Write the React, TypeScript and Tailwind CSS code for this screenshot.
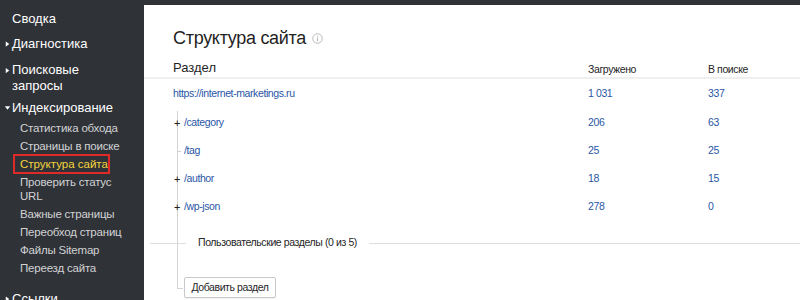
import React from 'react';

type NavItem = { label: string; arrow?: 'right' | 'down' };

const subItems = [
  'Статистика обхода',
  'Страницы в поиске',
  'Структура сайта',
  'Проверить статус URL',
  'Важные страницы',
  'Переобход страниц',
  'Файлы Sitemap',
  'Переезд сайта',
];

const rows = [
  { path: '/category', loaded: '206', found: '63', expand: true },
  { path: '/tag', loaded: '25', found: '25', expand: false },
  { path: '/author', loaded: '18', found: '15', expand: true },
  { path: '/wp-json', loaded: '278', found: '0', expand: true },
];

function Arrow({ dir }: { dir: 'right' | 'down' }) {
  return (
    <svg className="absolute left-[4px] top-1/2 h-[7px] w-[7px] -translate-y-1/2" viewBox="0 0 8 8">
      {dir === 'right' ? <path d="M2 1l4 3-4 3z" fill="#fff" /> : <path d="M1 2h6L4 6z" fill="#fff" />}
    </svg>
  );
}

function TopItem({ label, arrow, className = '' }: NavItem & { className?: string }) {
  return (
    <div className={`relative pl-[12px] text-[13px] leading-[16px] text-white ${className}`}>
      {arrow && <Arrow dir={arrow} />}
      {label}
    </div>
  );
}

function Sidebar() {
  return (
    <aside className="w-[144px] shrink-0 pt-[11px]">
      <TopItem label="Сводка" />
      <TopItem label="Диагностика" arrow="right" className="mt-[9px]" />
      <div className="relative mt-[10px] pl-[12px] text-[13px] leading-[16px] text-white">
        <svg className="absolute left-[4px] top-[5px] h-[7px] w-[7px]" viewBox="0 0 8 8">
          <path d="M2 1l4 3-4 3z" fill="#fff" />
        </svg>
        Поисковые
        <br />
        запросы
      </div>
      <TopItem label="Индексирование" arrow="down" className="mt-[6px]" />
      <ul className="mt-[3px] text-[11.5px] leading-[14px] text-[#d2d3d5]">
        {subItems.map((s) =>
          s === 'Структура сайта' ? (
            <li key={s} className="py-[2px] pl-[13px]">
              <span className="-my-[3px] inline-block w-[97px] border-2 border-[#e02a2a] py-[1px] pl-[5px] text-[#f4d43c]">
                {s}
              </span>
            </li>
          ) : (
            <li key={s} className="w-[124px] py-[2px] pl-[20px] tracking-[-0.2px]">
              {s}
            </li>
          )
        )}
      </ul>
      <TopItem label="Ссылки" arrow="right" className="mt-[14px]" />
    </aside>
  );
}

function InfoIcon() {
  return (
    <svg className="ml-[6px] h-[11px] w-[11px]" viewBox="0 0 12 12">
      <circle cx="6" cy="6" r="5.2" fill="none" stroke="#b5b5b5" strokeWidth="1" />
      <rect x="5.4" y="5" width="1.2" height="4" fill="#b5b5b5" />
      <rect x="5.4" y="3" width="1.2" height="1.2" fill="#b5b5b5" />
    </svg>
  );
}

const small = 'text-[10.5px] tracking-[-0.4px]';

export default function App() {
  return (
    <div className="flex h-[300px] w-[800px] overflow-hidden bg-[#2f3237] font-['Liberation_Sans',Arial,sans-serif]">
      <Sidebar />
      <main className="mt-[5px] flex-1 bg-white">
        <h1 className="mt-[21px] flex h-[24px] items-center pl-[29px] text-[18px] leading-[24px] tracking-[-0.3px] text-[#1f1f1f]">
          Структура сайта
          <InfoIcon />
        </h1>

        <div className="grid h-[29px] grid-cols-[444px_120px_1fr] items-end border-b-2 border-[#efefef] pb-[1px] leading-[14px] text-[#262626]">
          <div className="pl-[29px] text-[13px] leading-[16px] text-[#1f1f1f]">Раздел</div>
          <div className={small}>Загружено</div>
          <div className={small}>В поиске</div>
        </div>

        <div className={`grid h-[30px] grid-cols-[444px_120px_1fr] items-center text-[#2a56a6] ${small}`}>
          <div className="pl-[29px]">https://internet-marketings.ru</div>
          <div>1 031</div>
          <div>337</div>
        </div>

        <div className="relative">
          <div className="absolute left-[33px] top-[2px] h-[178px] w-[6px] border-b border-l border-[#d4d4d4]" />

          {rows.map((r) => (
            <div key={r.path} className={`grid h-[28px] grid-cols-[444px_120px_1fr] items-center text-[#2a56a6] ${small}`}>
              <div className="relative pl-[40px]">
                {r.expand ? (
                  <span className="absolute left-[30px] top-1/2 -translate-y-1/2 text-[11px] leading-[10px] tracking-normal text-[#222]">+</span>
                ) : (
                  <span className="absolute left-[34px] top-1/2 h-px w-[3px] bg-[#cfcfcf]" />
                )}
                {r.path}
              </div>
              <div>{r.loaded}</div>
              <div>{r.found}</div>
            </div>
          ))}

          <div className={`flex h-[44px] items-center text-[#262626] ${small}`}>
            <div className="ml-[6px] h-px w-[36px] bg-[#dedede]" />
            <span className="px-[12px]">Пользовательские разделы (0 из 5)</span>
            <div className="h-px flex-1 bg-[#dedede]" />
          </div>

          <div className="mt-[9px] pl-[40px]">
            <button
              type="button"
              className={`h-[21px] w-[92px] rounded-[2px] border border-[#c9c9c9] bg-white leading-[19px] text-[#1f1f1f] shadow-[0_1px_1px_rgba(0,0,0,0.06)] ${small}`}
            >
              Добавить раздел
            </button>
          </div>
        </div>
      </main>
    </div>
  );
}
